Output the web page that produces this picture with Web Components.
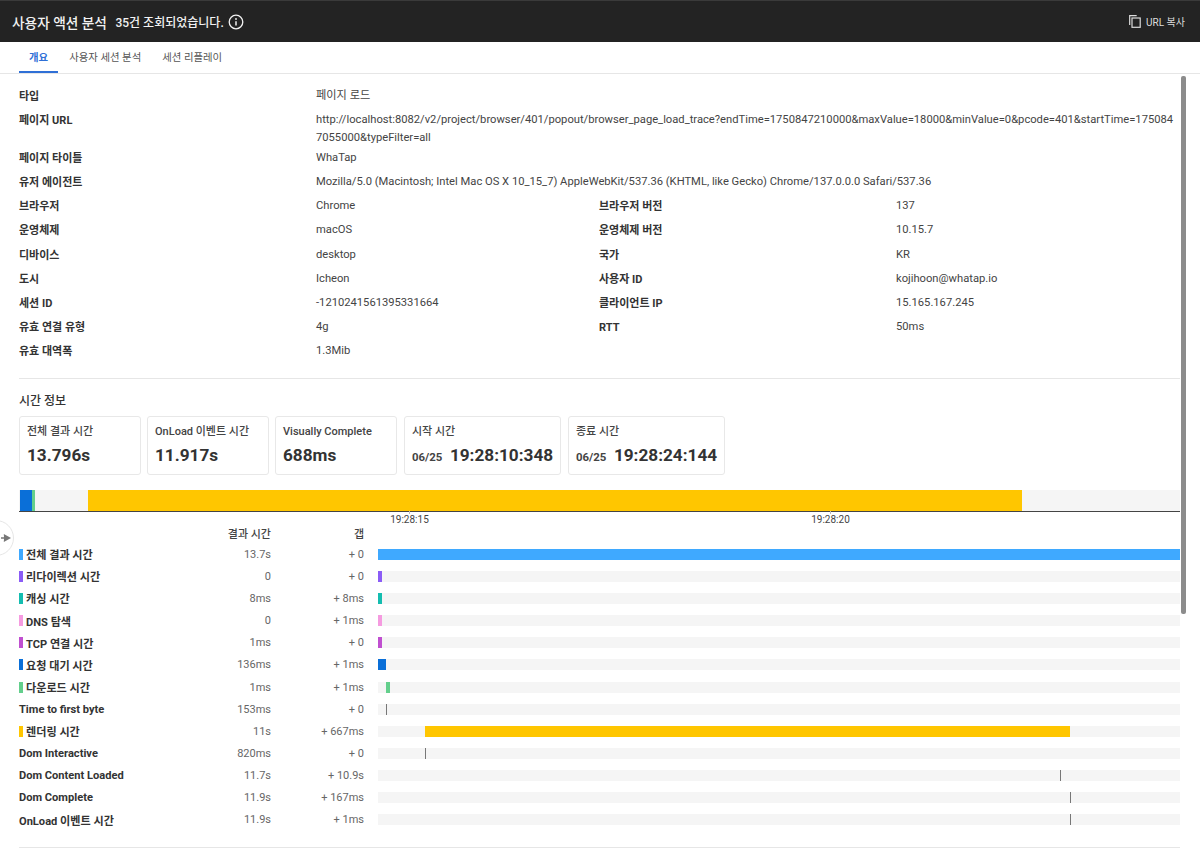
<!DOCTYPE html>
<html lang="ko">
<head>
<meta charset="utf-8">
<title>사용자 액션 분석</title>
<style>
    html, body { margin: 0; height: 100%; overflow: hidden; background: #fff; }
    body { font-family: Roboto, "Noto Sans CJK KR", sans-serif; color: #333; }
</style>
</head>
<body>
<action-page></action-page>
<script>
class TopBar extends HTMLElement {
    connectedCallback() {
        this.attachShadow({ mode: 'open' }).innerHTML = `
            <style>
                :host {
                    display: flex;
                    align-items: center;
                    height: 41px;
                    padding: 0 15px 0 12px;
                    background: #232323;
                    border-top: 1px solid #3a3a3a;
                    color: #f2f2f2;
                }
                h1 { margin: 0; font-size: 13.7px; font-weight: 500; }
                .count { margin-left: 8.500px; font-size: 12px; font-weight: 500; }
                svg { display: block; }
                .info { margin-left: 4px; }
                .copy { margin-left: auto; display: flex; align-items: center; gap: 5px; font-size: 10px; color: #ddd; }
            </style>
            <h1>사용자 액션 분석</h1>
            <span class="count">35건 조회되었습니다.</span>
            <svg class="info" width="16" height="16" viewBox="0 0 16 16" fill="none" stroke="#f2f2f2">
                <circle cx="8" cy="8" r="6.8" stroke-width="1.3"/>
                <path d="M8 7.2v4.2" stroke-width="1.5"/>
                <circle cx="8" cy="5" r=".9" fill="#f2f2f2" stroke="none"/>
            </svg>
            <span class="copy">
                <svg width="12" height="13" viewBox="0 0 12 13" fill="none" stroke="#ddd" stroke-width="1.2">
                    <path d="M.7 10V.7h7"/>
                    <rect x="3" y="3" width="8.2" height="9.3"/>
                </svg>
                URL 복사
            </span>
        `;
    }
}

class TabBar extends HTMLElement {
    connectedCallback() {
        this.attachShadow({ mode: 'open' }).innerHTML = `
            <style>
                :host {
                    display: flex;
                    height: 31px;
                    padding-left: 19px;
                    gap: 1px;
                    border-bottom: 1px solid #e6e6e6;
                    font-size: 10.4px;
                    color: #555;
                }
                span { display: flex; align-items: center; padding: 0 10px 2px; }
                .active { color: #2f6fd6; font-weight: 700; border-bottom: 2px solid #2f6fd6; padding-bottom: 0; height: 29px; margin-bottom: -1px; }
            </style>
            <span class="active">개요</span>
            <span>사용자 세션 분석</span>
            <span>세션 리플레이</span>
        `;
    }
}

class InfoGrid extends HTMLElement {
    connectedCallback() {
        this.attachShadow({ mode: 'open' }).innerHTML = `
            <style>
                :host {
                    display: grid;
                    grid-template-columns: 297px 283px 297px 1fr;
                    font-size: 11.2px;
                    line-height: 18px;
                    color: #444;
                    padding-bottom: 14px;
                    border-bottom: 1px solid #e6e6e6;
                }
                ::slotted(*) { padding: 2px 0 4.1px; }
                ::slotted(b) { padding: 3px 0 3.1px; font-size: 11px; font-weight: 700; color: #333; }
                ::slotted(.wide) { grid-column: 2 / 5; word-break: break-all; padding-right: 5px; }
                ::slotted(.url) { margin-bottom: -4px; }
            </style>
            <slot></slot>
        `;
    }
}

class StatCard extends HTMLElement {
    connectedCallback() {
        const date = this.getAttribute('date');
        this.attachShadow({ mode: 'open' }).innerHTML = `
            <style>
                :host {
                    display: block;
                    box-sizing: border-box;
                    height: 59px;
                    padding: 8px 7px 0;
                    border: 1px solid #e8e8e8;
                    border-radius: 3px;
                }
                .label { font-size: 11px; font-weight: 500; line-height: 14px; color: #444; }
                .value { margin-top: 5px; display: flex; align-items: baseline; gap: 7.500px; font-size: 17.2px; font-weight: 700; line-height: 22px; color: #333; }
                small { font-size: 11.4px; color: #444; }
            </style>
            <div class="label">${this.getAttribute('label')}</div>
            <div class="value">${date ? `<small>${date}</small>` : ''}<span>${this.getAttribute('value')}</span></div>
        `;
    }
}

class TimeRuler extends HTMLElement {
    connectedCallback() {
        this.attachShadow({ mode: 'open' }).innerHTML = `
            <style>
                :host { display: block; position: relative; height: 21px; background: #f5f5f5; border-bottom: 1px solid #444; }
                i { position: absolute; top: 0; height: 100%; }
                b { position: absolute; top: 100%; width: 1px; height: 3px; background: #bbb; }
                span { position: absolute; top: 24px; width: 60px; margin-left: -30px; text-align: center; font-size: 10px; color: #444; }
            </style>
            <i style="left:1px;width:12px;background:#0a6fd8"></i>
            <i style="left:13px;width:3px;background:#63cf8c"></i>
            <i style="left:69px;width:934px;background:#ffc600"></i>
            <b style="left:390px"></b>
            <b style="left:811px"></b>
            <span style="left:390.500px">19:28:15</span>
            <span style="left:811.500px">19:28:20</span>
        `;
    }
}

class TimingRow extends HTMLElement {
    connectedCallback() {
        const color = this.getAttribute('color');
        const left = this.getAttribute('left') || 0;
        const width = this.getAttribute('width');
        const mark = this.getAttribute('mark');
        this.attachShadow({ mode: 'open' }).innerHTML = `
            <style>
                :host {
                    display: grid;
                    grid-template-columns: 180px 72px 93px 1fr;
                    align-items: center;
                    height: 22.17px;
                    font-size: 11px;
                    color: #666;
                }
                .name { display: flex; align-items: center; gap: 3px; font-size: 11.1px; font-weight: 700; color: #333; white-space: nowrap; }
                .chip { width: 4px; height: 11px; }
                .num { text-align: right; }
                .track { position: relative; margin-left: 14px; height: 11px; background: #f5f5f5; }
                .track i { position: absolute; top: 0; height: 100%; }
            </style>
            <div class="name">${color ? `<span class="chip" style="background:${color}"></span>` : ''}${this.getAttribute('name')}</div>
            <div class="num">${this.getAttribute('result')}</div>
            <div class="num">${this.getAttribute('gap')}</div>
            <div class="track">
                ${width ? `<i style="left:${left}px;width:${width}px;background:${color}"></i>` : ''}
                ${mark ? `<i style="left:${mark}px;width:1px;background:#777"></i>` : ''}
            </div>
        `;
    }
}

class TimingTable extends HTMLElement {
    connectedCallback() {
        this.attachShadow({ mode: 'open' }).innerHTML = `
            <style>
                :host { display: block; }
                .head { display: grid; grid-template-columns: 252px 93px; height: 20px; align-items: center; font-size: 11px; font-weight: 500; color: #444; text-align: right; }
            </style>
            <div class="head"><span>결과 시간</span><span>갭</span></div>
            <slot></slot>
        `;
    }
}

class ActionPage extends HTMLElement {
    connectedCallback() {
        this.attachShadow({ mode: 'open' }).innerHTML = `
            <style>
                :host { display: block; height: 857px; position: relative; overflow: hidden; }
                main { padding: 11px 20px 0 19px; }
                h2 { margin: 14px 0 6px; font-size: 12px; line-height: 17px; font-weight: 500; color: #333; }
                .cards { display: flex; gap: 6px; }
                .w1 { width: 122px; }
                .w2 { width: 157px; margin-left: 1px; }
                time-ruler { margin-top: 15px; }
                timing-table { margin-top: 11px; }
                .end { height: 16px; border-bottom: 1px solid #e6e6e6; }
                .scroll { position: absolute; left: 1181px; top: 76px; width: 5px; height: 538px; background: #8c8c8c; border-radius: 2px; }
                .handle { position: absolute; left: -22px; top: 520px; box-sizing: border-box; width: 36px; height: 36px; display: flex; align-items: center; justify-content: flex-end; padding-right: 2px; background: #fff; border: 1px solid #e6e6e6; border-radius: 50%; }
            </style>
            <top-bar></top-bar>
            <tab-bar></tab-bar>
            <main>
                <info-grid>
                    <b>타입</b><span class="wide">페이지 로드</span>
                    <b class="url">페이지 URL</b><span class="wide url">http://localhost:8082/v2/project/browser/401/popout/browser_page_load_trace?endTime=1750847210000&amp;maxValue=18000&amp;minValue=0&amp;pcode=401&amp;startTime=1750847055000&amp;typeFilter=all</span>
                    <b>페이지 타이틀</b><span class="wide">WhaTap</span>
                    <b>유저 에이전트</b><span class="wide">Mozilla/5.0 (Macintosh; Intel Mac OS X 10_15_7) AppleWebKit/537.36 (KHTML, like Gecko) Chrome/137.0.0.0 Safari/537.36</span>
                    <b>브라우저</b><span>Chrome</span><b>브라우저 버전</b><span>137</span>
                    <b>운영체제</b><span>macOS</span><b>운영체제 버전</b><span>10.15.7</span>
                    <b>디바이스</b><span>desktop</span><b>국가</b><span>KR</span>
                    <b>도시</b><span>Icheon</span><b>사용자 ID</b><span>kojihoon@whatap.io</span>
                    <b>세션 ID</b><span>-1210241561395331664</span><b>클라이언트 IP</b><span>15.165.167.245</span>
                    <b>유효 연결 유형</b><span>4g</span><b>RTT</b><span>50ms</span>
                    <b>유효 대역폭</b><span>1.3Mib</span><span></span><span></span>
                </info-grid>
                <h2>시간 정보</h2>
                <div class="cards">
                    <stat-card class="w1" label="전체 결과 시간" value="13.796s"></stat-card>
                    <stat-card class="w1" label="OnLoad 이벤트 시간" value="11.917s"></stat-card>
                    <stat-card class="w1" label="Visually Complete" value="688ms"></stat-card>
                    <stat-card class="w2" label="시작 시간" date="06/25" value="19:28:10:348"></stat-card>
                    <stat-card class="w2" label="종료 시간" date="06/25" value="19:28:24:144"></stat-card>
                </div>
                <time-ruler></time-ruler>
                <timing-table>
                    <timing-row name="전체 결과 시간" result="13.7s" gap="+ 0" color="#3fa9ff" width="802"></timing-row>
                    <timing-row name="리다이렉션 시간" result="0" gap="+ 0" color="#8b5cf6" width="4"></timing-row>
                    <timing-row name="캐싱 시간" result="8ms" gap="+ 8ms" color="#14bdb0" width="4"></timing-row>
                    <timing-row name="DNS 탐색" result="0" gap="+ 1ms" color="#f59be0" width="4"></timing-row>
                    <timing-row name="TCP 연결 시간" result="1ms" gap="+ 0" color="#c04fd0" width="4"></timing-row>
                    <timing-row name="요청 대기 시간" result="136ms" gap="+ 1ms" color="#0a6fd8" width="8"></timing-row>
                    <timing-row name="다운로드 시간" result="1ms" gap="+ 1ms" color="#63cf8c" left="8" width="4"></timing-row>
                    <timing-row name="Time to first byte" result="153ms" gap="+ 0" mark="8"></timing-row>
                    <timing-row name="렌더링 시간" result="11s" gap="+ 667ms" color="#ffc600" left="47" width="645"></timing-row>
                    <timing-row name="Dom Interactive" result="820ms" gap="+ 0" mark="47"></timing-row>
                    <timing-row name="Dom Content Loaded" result="11.7s" gap="+ 10.9s" mark="682"></timing-row>
                    <timing-row name="Dom Complete" result="11.9s" gap="+ 167ms" mark="692"></timing-row>
                    <timing-row name="OnLoad 이벤트 시간" result="11.9s" gap="+ 1ms" mark="692"></timing-row>
                </timing-table>
                <div class="end"></div>
            </main>
            <div class="scroll"></div>
            <div class="handle">
                <svg width="10" height="10" viewBox="0 0 10 10" fill="#777"><path d="M0 4.200h3L2.800 1 10 5 2.800 9 3 5.800H0z"/></svg>
            </div>
        `;
    }
}

customElements.define('top-bar', TopBar);
customElements.define('tab-bar', TabBar);
customElements.define('info-grid', InfoGrid);
customElements.define('stat-card', StatCard);
customElements.define('time-ruler', TimeRuler);
customElements.define('timing-row', TimingRow);
customElements.define('timing-table', TimingTable);
customElements.define('action-page', ActionPage);
</script>
</body>
</html>
